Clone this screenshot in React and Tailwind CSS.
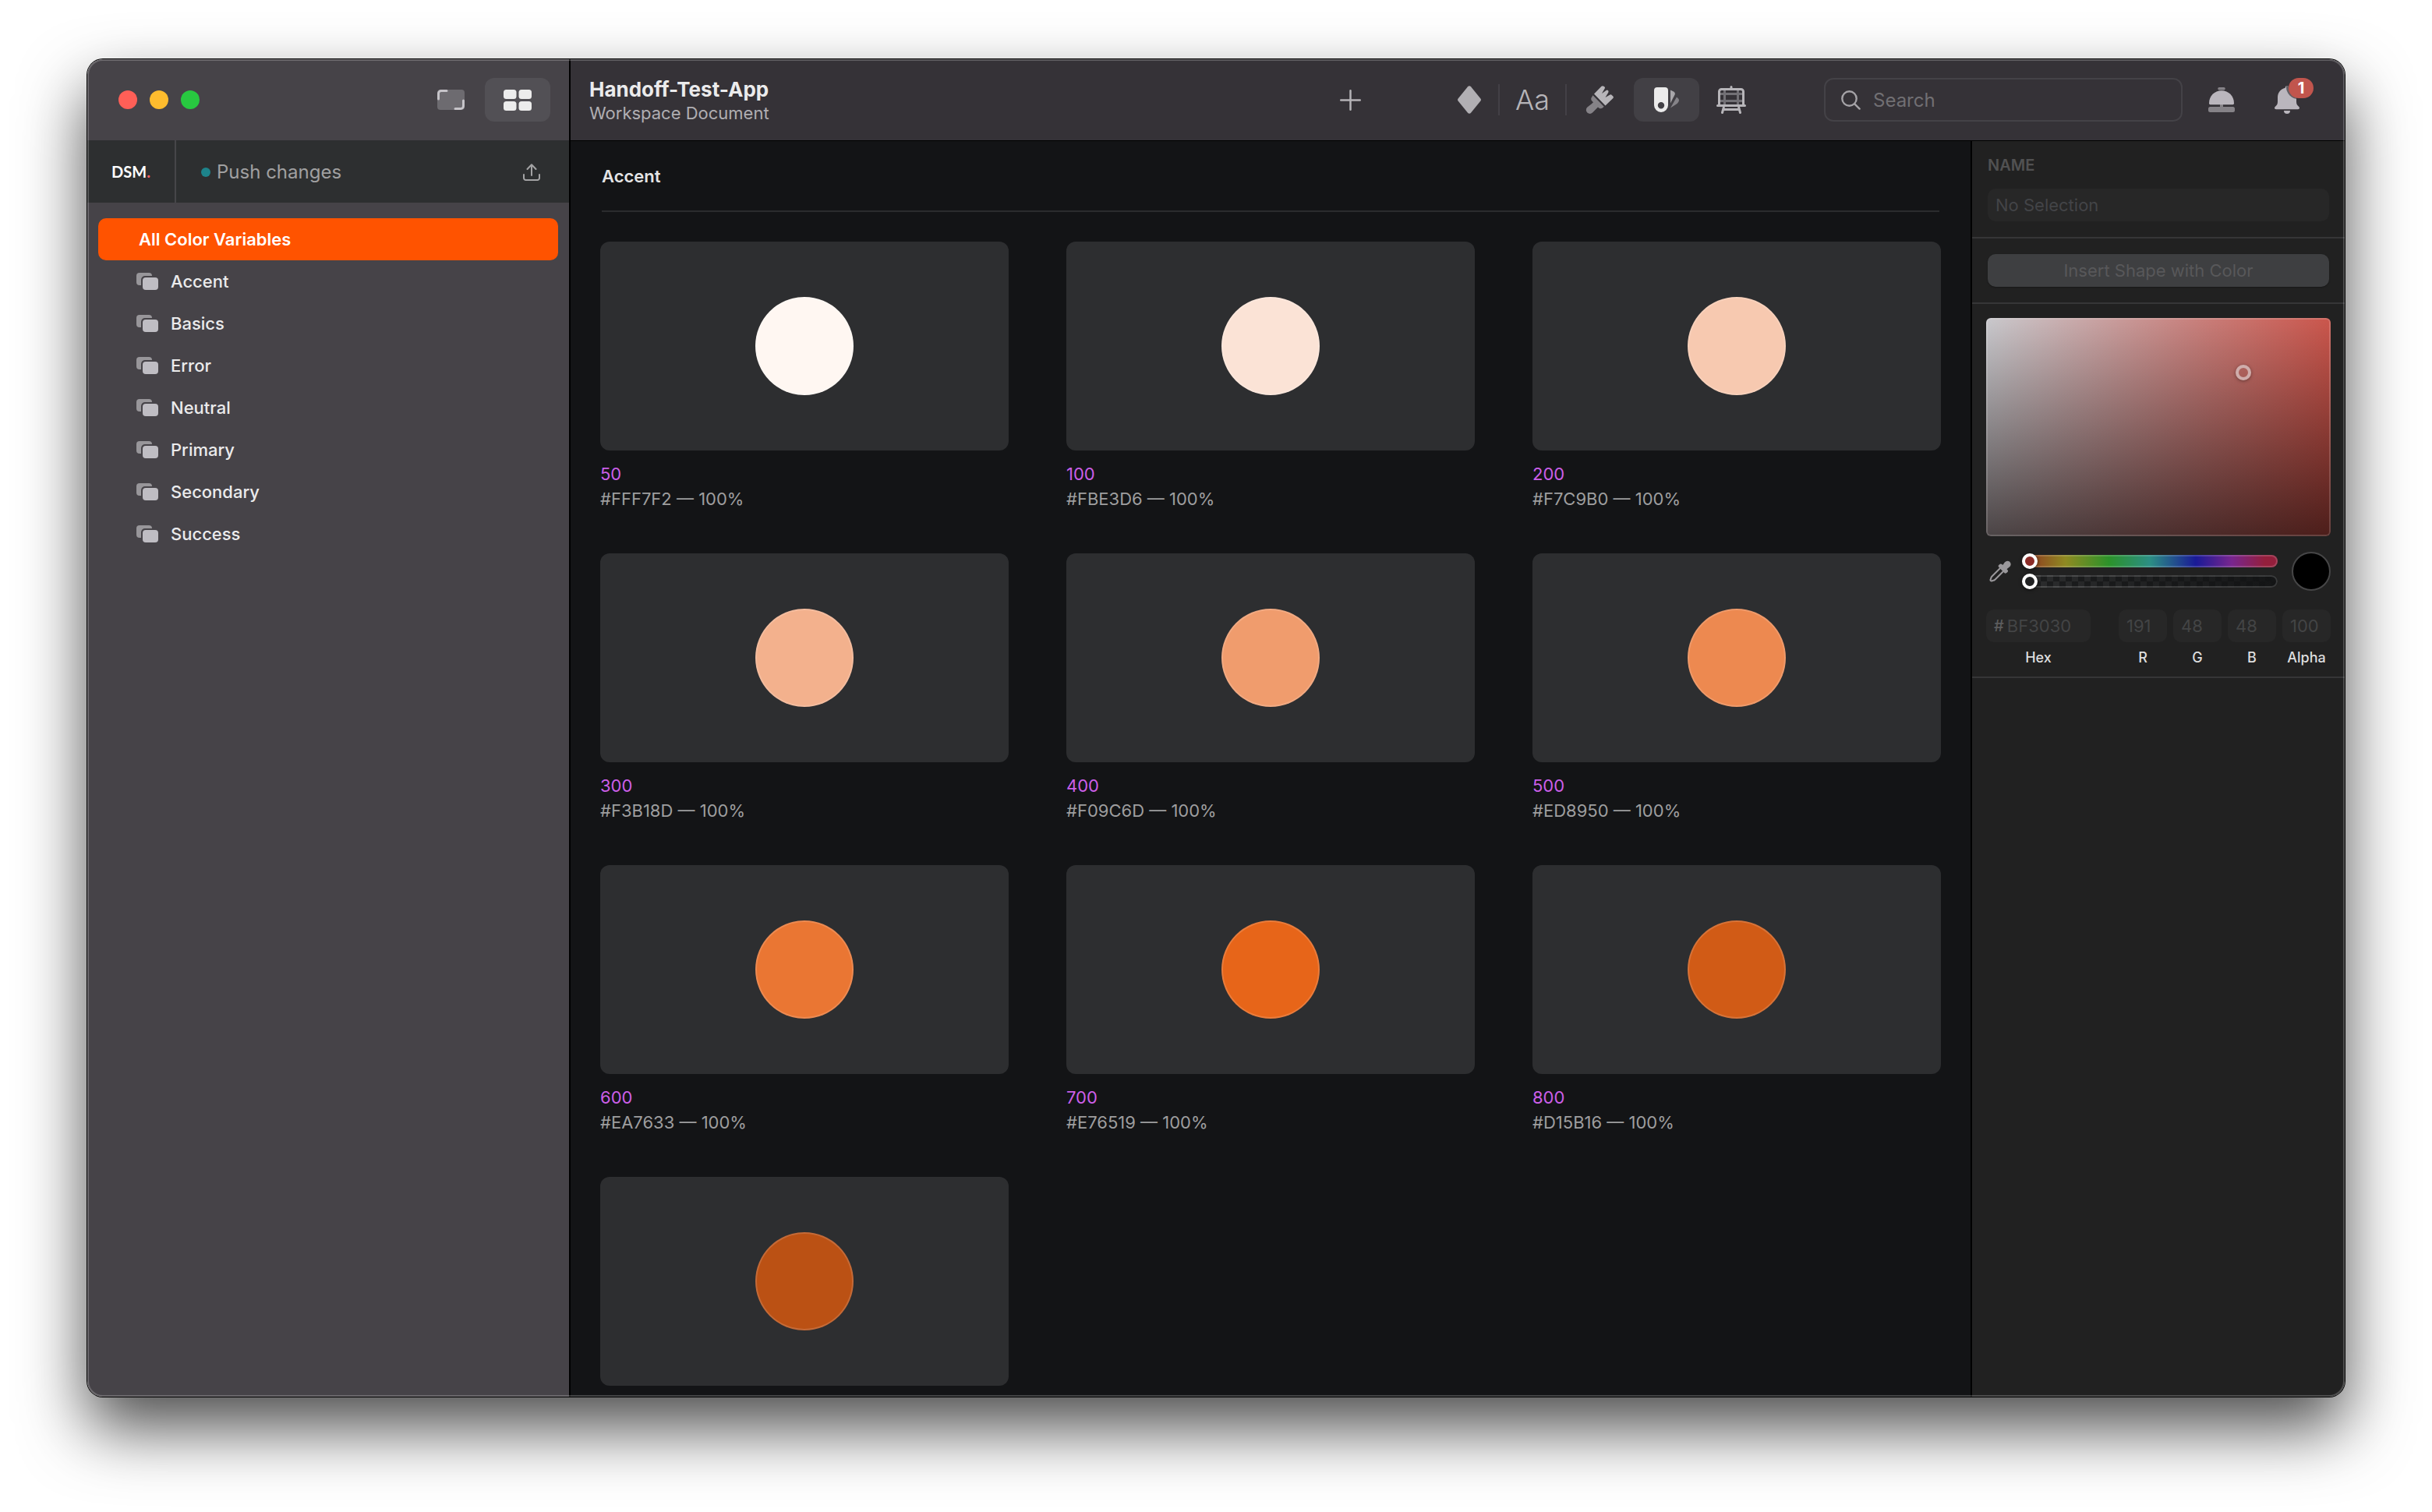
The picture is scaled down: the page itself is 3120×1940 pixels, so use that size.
import React from "react";

const groups = ["Accent", "Basics", "Error", "Neutral", "Primary", "Secondary", "Success"];

const swatches = [
  { name: "50", hex: "#FFF7F2" },
  { name: "100", hex: "#FBE3D6" },
  { name: "200", hex: "#F7C9B0" },
  { name: "300", hex: "#F3B18D" },
  { name: "400", hex: "#F09C6D" },
  { name: "500", hex: "#ED8950" },
  { name: "600", hex: "#EA7633" },
  { name: "700", hex: "#E76519" },
  { name: "800", hex: "#D15B16" },
  { hex: "#BB5114" },
];

const channels = [
  { id: "red", label: "R", value: "191" },
  { id: "green", label: "G", value: "48" },
  { id: "blue", label: "B", value: "48" },
  { id: "alpha", label: "Alpha", value: "100" },
];

const CanvasIcon = () => (
  <svg width="35" height="26" viewBox="0 0 35 26" fill="none" aria-hidden="true">
    <rect x="0" y="0" width="35" height="26" rx="4" fill="#6d6b70" />
    <path d="M1.5 12V5a3.5 3.5 0 0 1 3.500-3.500H12" stroke="#c6c4c9" strokeWidth="3" strokeLinecap="round" />
    <path d="M33.500 14v7a3.500 3.500 0 0 1-3.500 3.500H23" stroke="#c6c4c9" strokeWidth="3" strokeLinecap="round" />
  </svg>
);

const GridIcon = () => (
  <svg width="36" height="27" viewBox="0 0 36 27" fill="#ececec" aria-hidden="true">
    <rect x="0" y="0" width="16.500" height="12" rx="3.500" />
    <rect x="19.500" y="0" width="16.500" height="12" rx="3.500" />
    <rect x="0" y="15" width="16.500" height="12" rx="3.500" />
    <rect x="19.500" y="15" width="16.500" height="12" rx="3.500" />
  </svg>
);

const UploadIcon = () => (
  <svg width="22" height="22" viewBox="0 0 22 22" fill="none" stroke="#a3a3a4" strokeWidth="2" strokeLinecap="round" strokeLinejoin="round" aria-hidden="true">
    <path d="M11 15V1.500M5.500 7 11 1.200 16.500 7" />
    <path d="M1 14v4.500A2.500 2.500 0 0 0 3.500 21h15a2.500 2.500 0 0 0 2.500-2.500V14" />
  </svg>
);

const LayersIcon = () => (
  <svg width="28" height="22" viewBox="0 0 28 22" aria-hidden="true">
    <rect x="0" y="0" width="20" height="16" rx="4" fill="#98969a" />
    <rect x="6" y="4" width="26" height="22" rx="5" fill="#464348" />
    <rect x="8" y="6" width="20" height="16" rx="4" fill="#bfbdc3" />
  </svg>
);

const PlusIcon = () => (
  <svg width="27" height="27" viewBox="0 0 27 27" stroke="#b5b3b7" strokeWidth="2.500" strokeLinecap="round" aria-hidden="true">
    <path d="M13.500 1.250v24.500M1.250 13.500h24.500" />
  </svg>
);

const DiamondIcon = () => (
  <svg width="30" height="36" viewBox="0 0 30 36" fill="#b1afb3" aria-hidden="true">
    <path d="M13 1.200a2.600 2.600 0 0 1 4 0l12.400 15.300a2.400 2.400 0 0 1 0 3L17 34.800a2.600 2.600 0 0 1-4 0L.6 19.500a2.400 2.400 0 0 1 0-3Z" />
  </svg>
);

const BrushIcon = () => (
  <svg width="36" height="36" viewBox="0 0 36 36" aria-hidden="true">
    <path d="M11 10.500 20.500.8q1.500-1.300 3 0l1 .8q.9.900.2 2L21 10l5.500-4q1.500-.9 2.600.3.900 1.200 0 2.600L25.500 15l6-3.500q1.200-.6 2 .2l2 2q.9 1.200-.1 2.300L25.500 25.500Z" fill="#b7b5b9" />
    <path d="m9.500 12.300 14.200 14.400-1.500 1.500q-2.400 2.200-5 .2l-1.200-1-2.500 2.600-4.500 4.500a4.700 4.700 0 0 1-7.600-1.300 5 5 0 0 1 1-5.700l5.800-4.500 1.800-1.700-1.500-1.500q-2.300-2.500-.5-5Z" fill="#858287" />
  </svg>
);

const SwatchIcon = () => (
  <svg width="32" height="32" viewBox="0 0 32 32" aria-hidden="true">
    <path fillRule="evenodd" fill="#ebebeb" d="M4 0h10a4 4 0 0 1 4 4v19a9 9 0 0 1-18 0V4a4 4 0 0 1 4-4Zm5 19a4.200 4.200 0 1 0 0 8.400 4.200 4.200 0 0 0 0-8.400Z" />
    <path d="M21 3.500 25 5.500q2.500 1.300 1.800 3.500L21 20.500Z" fill="#a9a7ab" />
    <path d="m29 12.500 2.300 2.200q1.400 1.700 0 4Q30 21 28 22l-7 4.500Z" fill="#858388" />
  </svg>
);

const EaselIcon = () => (
  <svg width="38" height="36" viewBox="0 0 38 36" fill="none" strokeLinecap="round" aria-hidden="true">
    <path d="M10.500 4v21M27.500 4v21M4 10.500h30M4 19.500h30" stroke="#727075" strokeWidth="3" strokeLinecap="butt" />
    <path d="M3.500 25V7.500a3 3 0 0 1 3-3h25a3 3 0 0 1 3 3V25" stroke="#b7b5b9" strokeWidth="3" />
    <path d="M19 1.500v2M1.500 25.500h35M9.300 28 7.500 34.500M28.700 28l1.800 6.500M9.500 30.500h19" stroke="#b7b5b9" strokeWidth="3" />
  </svg>
);

const SearchIcon = () => (
  <svg width="25" height="25" viewBox="0 0 25 25" fill="none" stroke="#a5a3a7" strokeWidth="2.400" strokeLinecap="round" aria-hidden="true">
    <circle cx="10.500" cy="10.500" r="9.200" />
    <path d="m17.300 17.300 6.300 6.300" />
  </svg>
);

const ServiceBellIcon = () => (
  <svg width="34" height="32" viewBox="0 0 34 32" aria-hidden="true">
    <path d="M14 0h6a1.500 1.500 0 0 1 0 3.600h-6A1.500 1.500 0 0 1 14 0ZM15 22h4v4h-4Z" fill="#858287" />
    <rect x="0" y="25" width="34" height="7" rx="2.500" fill="#858287" />
    <path d="M1 20.500C1 11 8 4.200 17 4.200S33 11 33 20.500q0 1.800-1.500 1.800h-29Q1 22.300 1 20.500Z" fill="#bab6bd" />
  </svg>
);

const bellBody =
  "M16 0q2 0 2.300 2.700C24.500 4.500 28 9 28 15v5.500c0 3 1 4.500 3.300 6.500 1.400 1.500.5 3.300-1.300 3.300H2C.2 30.300-.7 28.500.7 27 3 25 4 23.500 4 20.500V15C4 9 7.500 4.500 13.700 2.700 14 0 16 0 16 0Z";

const BellIcon = () => (
  <svg width="32" height="36" viewBox="0 0 32 36" aria-hidden="true">
    <clipPath id="bell-body">
      <path d={bellBody} />
    </clipPath>
    <path d={bellBody} fill="#bab6bd" />
    <rect x="15" y="-14" width="38" height="31" rx="15.500" fill="#625f64" clipPath="url(#bell-body)" />
    <path d="M12 32h8a4 4 0 0 1-8 0Z" fill="#bab6bd" />
  </svg>
);

const DropperIcon = () => (
  <svg width="28" height="28" viewBox="0 0 28 28" aria-hidden="true">
    <path d="M14.500 9.500 3.500 20.500q-1.200 1.200-1.300 2.700l-.7 1.600q-.2 1.700 1.700 1.700l1.700-.7q1.500-.1 2.700-1.300l11-11" fill="none" stroke="#9a989b" strokeWidth="2" strokeLinecap="round" />
    <path d="m12 6.200 1.700-1.500q1.400-.7 2.600.4l1 1 2.500-3.500Q22.500-.4 26 1.500q3 3.200.7 6.200l-4.200 3.500 1 1q1.100 1.400 0 2.700l-1.600 1.400q-1.400.9-2.600-.3l-7-7.200q-1.200-1.400-.3-2.600Z" fill="#9a989b" />
  </svg>
);

function ToolButton({ label, active, className, children }) {
  return (
    <button
      type="button"
      aria-label={label}
      aria-pressed={active}
      className={`flex h-14 shrink-0 items-center justify-center rounded-xl ${className || "w-[84px]"} ${active ? "bg-[#424045]" : ""}`}
    >
      {children}
    </button>
  );
}

const ToolDivider = () => <div className="h-10 w-0.5 shrink-0 bg-[#434046]" />;

function Sidebar() {
  return (
    <aside className="flex w-[620px] shrink-0 flex-col border-r-2 border-black bg-[#464348]">
      <div className="flex h-[104px] shrink-0 items-center gap-0.5 pr-6 pl-10">
        <div className="flex flex-1 gap-4">
          <button type="button" aria-label="Close" className="size-6 rounded-full bg-[#ff5f57]" />
          <button type="button" aria-label="Minimize" className="size-6 rounded-full bg-[#febc2e]" />
          <button type="button" aria-label="Zoom" className="size-6 rounded-full bg-[#28c840]" />
        </div>
        <button type="button" aria-label="Canvas" className="flex h-14 w-[84px] items-center justify-center rounded-xl">
          <CanvasIcon />
        </button>
        <button type="button" aria-label="Components" aria-pressed="true" className="flex h-14 w-[84px] items-center justify-center rounded-xl bg-[#525055]">
          <GridIcon />
        </button>
      </div>

      <div className="flex h-20 shrink-0 items-stretch bg-[#2d2f30]">
        <div className="flex w-[114px] items-center justify-center border-r-2 border-[#464649] font-['Lato'] text-xl font-bold text-white">
          DSM<span className="text-[#ff5f66]">.</span>
        </div>
        <button type="button" className="flex flex-1 items-center pt-0.5 pr-[37px] pl-8 text-2xl text-[#a0a0a1]">
          <span className="mr-2 size-3 rounded-full bg-[#1d848b]" />
          <span className="flex-1 text-left">Push changes</span>
          <UploadIcon />
        </button>
      </div>

      <nav className="flex flex-col px-3.5 pt-5 text-[22px] font-medium text-[#ebebec]">
        <a href="#all" aria-current="page" className="flex h-[54px] items-center rounded-[10px] bg-[#ff5300] pl-13 font-semibold text-white">
          All Color Variables
        </a>
        {groups.map((group) => (
          <a key={group} href={`#${group.toLowerCase()}`} className="flex h-[54px] items-center gap-4 pl-[49px]">
            <LayersIcon />
            {group}
          </a>
        ))}
      </nav>
    </aside>
  );
}

function Toolbar() {
  return (
    <header className="flex h-[104px] shrink-0 items-center bg-[#353237] pr-8 pl-6">
      <div className="flex-1 pt-0.5">
        <h1 className="text-[26px] leading-8 font-bold text-[#ebebec]">Handoff-Test-App</h1>
        <p className="text-[22px] leading-7 text-[#b0aeb2]">Workspace Document</p>
      </div>

      <div className="mr-[74px]">
        <ToolButton label="Insert">
          <PlusIcon />
        </ToolButton>
      </div>

      <div className="mr-20 flex items-center">
        <ToolButton label="Symbols" className="w-[74px]">
          <DiamondIcon />
        </ToolButton>
        <ToolDivider />
        <ToolButton label="Text styles">
          <span className="text-4xl font-light text-[#b7b5b9]">Aa</span>
        </ToolButton>
        <ToolDivider />
        <div className="flex gap-0.5">
          <ToolButton label="Layer styles">
            <BrushIcon />
          </ToolButton>
          <ToolButton label="Color variables" active>
            <SwatchIcon />
          </ToolButton>
          <ToolButton label="Templates" className="w-[78px]">
            <EaselIcon />
          </ToolButton>
        </div>
      </div>

      <label className="mr-2 flex h-14 w-[460px] items-center gap-4 rounded-xl border-2 border-[#444247] px-5">
        <SearchIcon />
        <input type="search" aria-label="Search" placeholder="Search" className="min-w-0 flex-1 bg-transparent pt-0.5 text-2xl text-[#d0d0d0] outline-none placeholder:text-[#716f73]" />
      </label>

      <ToolButton label="Assistance">
        <ServiceBellIcon />
      </ToolButton>
      <div className="relative">
        <ToolButton label="Notifications">
          <BellIcon />
        </ToolButton>
        <span className="absolute top-0 right-2 flex h-[26px] w-8 items-center justify-center rounded-full bg-[#c1554d] text-xl font-bold text-white">1</span>
      </div>
    </header>
  );
}

function ColorCard({ name, hex }) {
  return (
    <li>
      <div className="flex h-[268px] items-center justify-center rounded-xl bg-[#2d2e30]">
        <div className="size-[126px] rounded-full border-2 border-white/15" style={{ backgroundColor: hex }} />
      </div>
      {name && (
        <div className="pt-3.5 text-[22px] leading-8">
          <p className="text-[#cc5fe9]">{name}</p>
          <p className="text-[#9e9e9f]">{hex} — 100%</p>
        </div>
      )}
    </li>
  );
}

const rangeBase =
  "block h-5 w-full appearance-none bg-transparent [&::-webkit-slider-runnable-track]:h-4 [&::-webkit-slider-runnable-track]:rounded-full [&::-webkit-slider-runnable-track]:shadow-[inset_0_0_0_2px_rgba(255,255,255,0.16)] [&::-webkit-slider-thumb]:-mt-0.5 [&::-webkit-slider-thumb]:size-5 [&::-webkit-slider-thumb]:appearance-none [&::-webkit-slider-thumb]:rounded-full [&::-webkit-slider-thumb]:border-4 [&::-webkit-slider-thumb]:border-white [&::-webkit-slider-thumb]:shadow-[0_1px_4px_rgba(0,0,0,0.6)]";

const hueTrack =
  "[&::-webkit-slider-runnable-track]:bg-[linear-gradient(90deg,#8f2c20,#8f8a22_17%,#2c922a_34%,#2c8f84_50%,#1a1a96_68%,#78268f_82%,#941f3c_95%)] [&::-webkit-slider-thumb]:bg-[#8c2c28]";

const alphaTrack =
  "[&::-webkit-slider-runnable-track]:bg-[linear-gradient(90deg,rgba(18,19,20,0),rgba(18,19,20,0.9)),repeating-conic-gradient(#1c1d1e_0_25%,#2c2d2e_0_50%)] [&::-webkit-slider-runnable-track]:bg-[size:100%_100%,16px_16px] [&::-webkit-slider-thumb]:bg-[#202122]";

const fieldLabel = "text-lg leading-6 font-medium text-[#dededf]";

function Inspector() {
  return (
    <aside className="flex w-[480px] shrink-0 flex-col border-l-2 border-black bg-[#212121]">
      <div className="flex flex-col gap-4 border-b-2 border-[#363637] px-5 pt-[17px] pb-5">
        <label htmlFor="color-name" className="text-xl leading-7 font-semibold text-[#515152]">
          NAME
        </label>
        <input id="color-name" disabled placeholder="No Selection" className="h-[42px] w-full rounded-[10px] bg-[#272727] px-2.5 text-[22px] placeholder:text-[#434447]" />
      </div>

      <div className="border-b-2 border-[#363637] p-5">
        <button type="button" disabled className="h-[42px] w-full rounded-[10px] bg-[#3e3f41] text-[22px] text-[#58585a] shadow-[0_1px_2px_rgba(0,0,0,0.3)]">
          Insert Shape with Color
        </button>
      </div>

      <div className="flex flex-col border-b-2 border-[#363637] px-[18px] pt-[18px] pb-3">
        <div className="relative h-[280px] rounded-md bg-[linear-gradient(180deg,transparent,rgba(10,0,0,0.66)),linear-gradient(90deg,#c9c9cd,#c98784_55%,#cb564c)] shadow-[inset_0_0_0_2px_rgba(255,255,255,0.16)]">
          <span className="absolute top-[60px] left-[320px] size-5 rounded-full border-4 border-[#cfadab] shadow-[0_1px_4px_rgba(0,0,0,0.4)]" />
        </div>

        <div className="mt-5 flex items-center">
          <button type="button" aria-label="Pick color" className="mr-3.5 ml-1">
            <DropperIcon />
          </button>
          <div className="flex flex-1 flex-col gap-1.5">
            <input type="range" aria-label="Hue" min="0" max="360" defaultValue="0" className={`${rangeBase} ${hueTrack}`} />
            <input type="range" aria-label="Opacity" min="0" max="100" defaultValue="0" className={`${rangeBase} ${alphaTrack}`} />
          </div>
          <div className="ml-[18px] size-[50px] rounded-full border-2 border-[#464647] bg-black" />
        </div>

        <div className="mt-6 flex gap-2 text-[22px]">
          <div className="mr-7 flex w-[134px] flex-col items-center gap-2">
            <div className="flex h-[42px] w-full items-center gap-1 rounded-[10px] bg-[#272727] pl-2.5">
              <span className="text-xl font-medium text-[#5c5c5d]">#</span>
              <input id="hex" disabled defaultValue="BF3030" className="min-w-0 flex-1 bg-transparent text-[#434445]" />
            </div>
            <label htmlFor="hex" className={fieldLabel}>
              Hex
            </label>
          </div>
          {channels.map(({ id, label, value }) => (
            <div key={id} className="flex min-w-0 flex-1 flex-col items-center gap-2">
              <input id={id} disabled defaultValue={value} className="h-[42px] w-full rounded-[10px] bg-[#272727] pl-2.5 text-[#434445]" />
              <label htmlFor={id} className={fieldLabel}>
                {label}
              </label>
            </div>
          ))}
        </div>
      </div>
    </aside>
  );
}

export default function App() {
  return (
    <div className="flex h-screen flex-col bg-white px-28 pt-[76px] pb-[148px] font-['Inter',sans-serif]">
      <div className="relative flex min-h-0 flex-1 overflow-hidden rounded-[20px] shadow-[0_0_0_1px_#000,0_40px_84px_rgba(0,0,0,0.7)]">
        <Sidebar />
        <div className="flex min-w-0 flex-1 flex-col">
          <Toolbar />
          <div className="flex min-h-0 flex-1 border-t border-black">
            <main className="min-w-0 flex-1 overflow-y-auto bg-[#131416] px-[38px]">
              <h2 className="mx-0.5 flex h-[91px] items-center border-b-2 border-[#2b2c2e] pt-0.5 text-[22px] font-semibold text-[#e4e4e5]">Accent</h2>
              <ul className="grid grid-cols-3 gap-x-[74px] gap-y-[54px] pt-[38px]">
                {swatches.map((swatch) => (
                  <ColorCard key={swatch.hex} {...swatch} />
                ))}
              </ul>
            </main>
            <Inspector />
          </div>
        </div>
        <div className="pointer-events-none absolute inset-0 rounded-[20px] shadow-[inset_0_0_0_2px_rgba(255,255,255,0.2)]" />
      </div>
    </div>
  );
}
